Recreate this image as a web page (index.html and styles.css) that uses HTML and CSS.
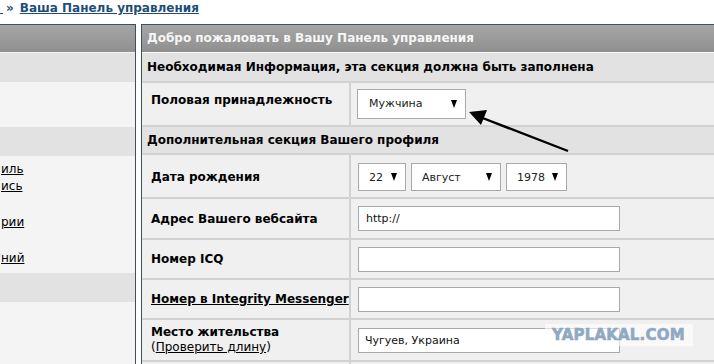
FILE: index.html
```html
<!DOCTYPE html>
<html lang="ru">
<head>
<meta charset="utf-8">
<title>Ваша Панель управления</title>
<link rel="stylesheet" href="styles.css">
</head>
<body>
<div class="nav"><span class="cut"></span><span class="sep">»</span><a class="crumb" href="#">Ваша Панель управления</a></div>
<div class="main">
  <aside class="side">
    <div class="grad side-hdr"></div>
    <div class="side-band"></div>
    <div class="side-body s1"></div>
    <div class="side-band"></div>
    <div class="side-body s2">
      <a class="side-link l1" href="#">иль</a>
      <a class="side-link l2" href="#">ись</a>
      <a class="side-link l3" href="#">рии</a>
      <a class="side-link l4" href="#">ний</a>
    </div>
    <div class="side-band"></div>
    <div class="side-body s3"></div>
  </aside>
  <section class="panel">
    <div class="grad p-hdr">Добро пожаловать в Вашу Панель управления</div>
    <div class="form">
      <div class="sub sub1">Необходимая Информация, эта секция должна быть заполнена</div>
      <div class="lbl r1 lbl-high">Половая принадлежность</div>
      <div class="val r1"><div class="sel sel-sex">Мужчина<i class="tri"></i></div></div>

      <div class="sub sub2">Дополнительная секция Вашего профиля</div>
      <div class="lbl r2">Дата рождения</div>
      <div class="val r2 dates">
        <div class="sel sel-day">22<i class="tri"></i></div>
        <div class="sel sel-month">Август<i class="tri"></i></div>
        <div class="sel sel-year">1978<i class="tri"></i></div>
      </div>

      <div class="lbl r3">Адрес Вашего вебсайта</div>
      <div class="val r3"><input class="txt" type="text" value="http://"></div>

      <div class="lbl r4">Номер ICQ</div>
      <div class="val r4"><input class="txt" type="text" value=""></div>

      <div class="lbl r5"><a class="lbl-link" href="#">Номер в Integrity Messenger</a></div>
      <div class="val r5"><input class="txt" type="text" value=""></div>

      <div class="lbl r6 two">
        <span>Место жительства</span>
        <span class="note">(<a href="#">Проверить длину</a>)</span>
      </div>
      <div class="val r6"><input class="txt" type="text" value="Чугуев, Украина"></div>

      <div class="lbl r7"></div>
      <div class="val r7"></div>
    </div>
  </section>
</div>
<svg class="arrow" width="714" height="364" viewBox="0 0 714 364" aria-hidden="true">
  <line x1="568" y1="151" x2="480" y2="117" stroke="#000" stroke-width="2.4"/>
  <polygon points="469,112 487,110 481,125" fill="#000"/>
</svg>
<div class="watermark">YAPLAKAL.COM</div>
</body>
</html>
```
FILE: styles.css
```css
html, body {
  margin: 0;
  padding: 0;
  overflow: hidden;
  background: #fff;
  font-family: "DejaVu Sans", Verdana, sans-serif;
  color: #000;
}
body {
  position: relative;
  width: 714px;
  height: 364px;
}

.nav {
  height: 24px;
  line-height: 17px;
  font-size: 12px;
  font-weight: bold;
  white-space: nowrap;
  color: #1d4e78;
}
.cut {
  display: inline-block;
  width: 3px;
  height: 1px;
  background: #1d4e78;
  vertical-align: -2px;
  margin-right: 3px;
}
.sep { color: #1d4e78; margin-right: 6px; }
.crumb { color: #1d4e78; text-decoration: underline; }

.main {
  display: flex;
  gap: 5px;
  align-items: flex-start;
}

.grad {
  background: linear-gradient(to bottom, #a5a5a5 0%, #9b9b9b 50%, #8f8f8f 100%);
}

/* left side panel */
.side {
  flex: none;
  width: 135px;
  height: 345px;
  border-top: 1px solid #3e5064;
  border-right: 1px solid #3e5064;
  background: #f4f4f4;
  display: flex;
  flex-direction: column;
}
.side-hdr { height: 27px; border-bottom: 1px solid #f4f4f4; flex: none; }
.side-band { height: 29px; background: #e2e2e2; flex: none; }
.side-body { background: #f4f4f4; flex: none; }
.s1 { height: 45px; }
.s2 { height: 117px; display: flex; flex-direction: column; align-items: flex-start; font-size: 12px; }
.s3 { flex: 1; }
.side-link { color: #000; text-decoration: underline; line-height: 17px; margin-left: 1px; }
.l1 { margin-top: 5px; }
.l2 { margin-top: 0; }
.l3 { margin-top: 19px; }
.l4 { margin-top: 19px; }

/* main panel */
.panel {
  flex: 1;
  margin-right: -40px;
  border-top: 1px solid #3e5064;
  border-left: 1px solid #3e5064;
  background: #f0f0f0;
}
.p-hdr {
  height: 27px;
  line-height: 27px;
  padding-left: 5px;
  font-size: 12px;
  font-weight: bold;
  color: #f6f6f6;
  border-bottom: 1px solid #fafafa;
  white-space: nowrap;
}

.form {
  display: grid;
  grid-template-columns: 207px 1fr;
  grid-template-rows: 28px 42px 26px 42px 39px 38px 38px 40px 30px;
  gap: 2px;
  background: #d2d2d2;
}
.sub {
  grid-column: 1 / -1;
  background: #e2e2e2;
  font-size: 12px;
  font-weight: bold;
  padding-left: 5px;
  display: flex;
  align-items: center;
  white-space: nowrap;
}
.lbl {
  background: #f0f0f0;
  padding-left: 9px;
  font-size: 12px;
  font-weight: bold;
  display: flex;
  align-items: center;
  white-space: nowrap;
}
.lbl-high { padding-bottom: 8px; }
.r2 { padding-top: 2px; }
.lbl-link { color: #000; text-decoration: underline; }
.two {
  flex-direction: column;
  align-items: flex-start;
  justify-content: center;
  line-height: 15px;
}
.note { font-weight: normal; }
.note a { color: #000; text-decoration: underline; }

.val {
  background: #f0f0f0;
  padding-left: 7px;
  display: flex;
  align-items: center;
}
.dates { gap: 5px; }

.sel {
  box-sizing: border-box;
  height: 28px;
  background: #fff;
  border: 1px solid #a9a9a9;
  font-size: 11px;
  color: #222;
  display: flex;
  align-items: center;
  justify-content: space-between;
  padding: 0 8px 0 10px;
}
.sel-sex { width: 109px; height: 30px; margin-left: -1px; margin-top: -1px; padding-left: 11px; }
.sel-day { width: 48px; }
.sel-month { width: 90px; }
.sel-year { width: 61px; }
.tri {
  width: 0;
  height: 0;
  border-left: 3.5px solid transparent;
  border-right: 3.5px solid transparent;
  border-top: 8px solid #000;
}

.txt {
  box-sizing: border-box;
  width: 262px;
  height: 25px;
  margin: 0;
  border: 1px solid #a9a9a9;
  background: #fff;
  padding: 0 0 0 7px;
  font-family: "DejaVu Sans", Verdana, sans-serif;
  font-size: 11px;
  color: #111;
  outline: none;
}
.r6 .txt { padding-left: 6px; }

.arrow {
  position: absolute;
  left: 0;
  top: 0;
  pointer-events: none;
}

.watermark {
  position: absolute;
  left: 545px;
  top: 324px;
  width: 148px;
  height: 22px;
  background: rgba(255, 255, 255, 0.6);
  color: #8fa9c2;
  font-family: "DejaVu Sans", sans-serif;
  font-weight: bold;
  font-size: 15px;
  line-height: 22px;
  padding-left: 7px;
  box-sizing: border-box;
  letter-spacing: 0.2px;
  -webkit-text-stroke: 0.6px #8fa9c2;
  white-space: nowrap;
}
```
